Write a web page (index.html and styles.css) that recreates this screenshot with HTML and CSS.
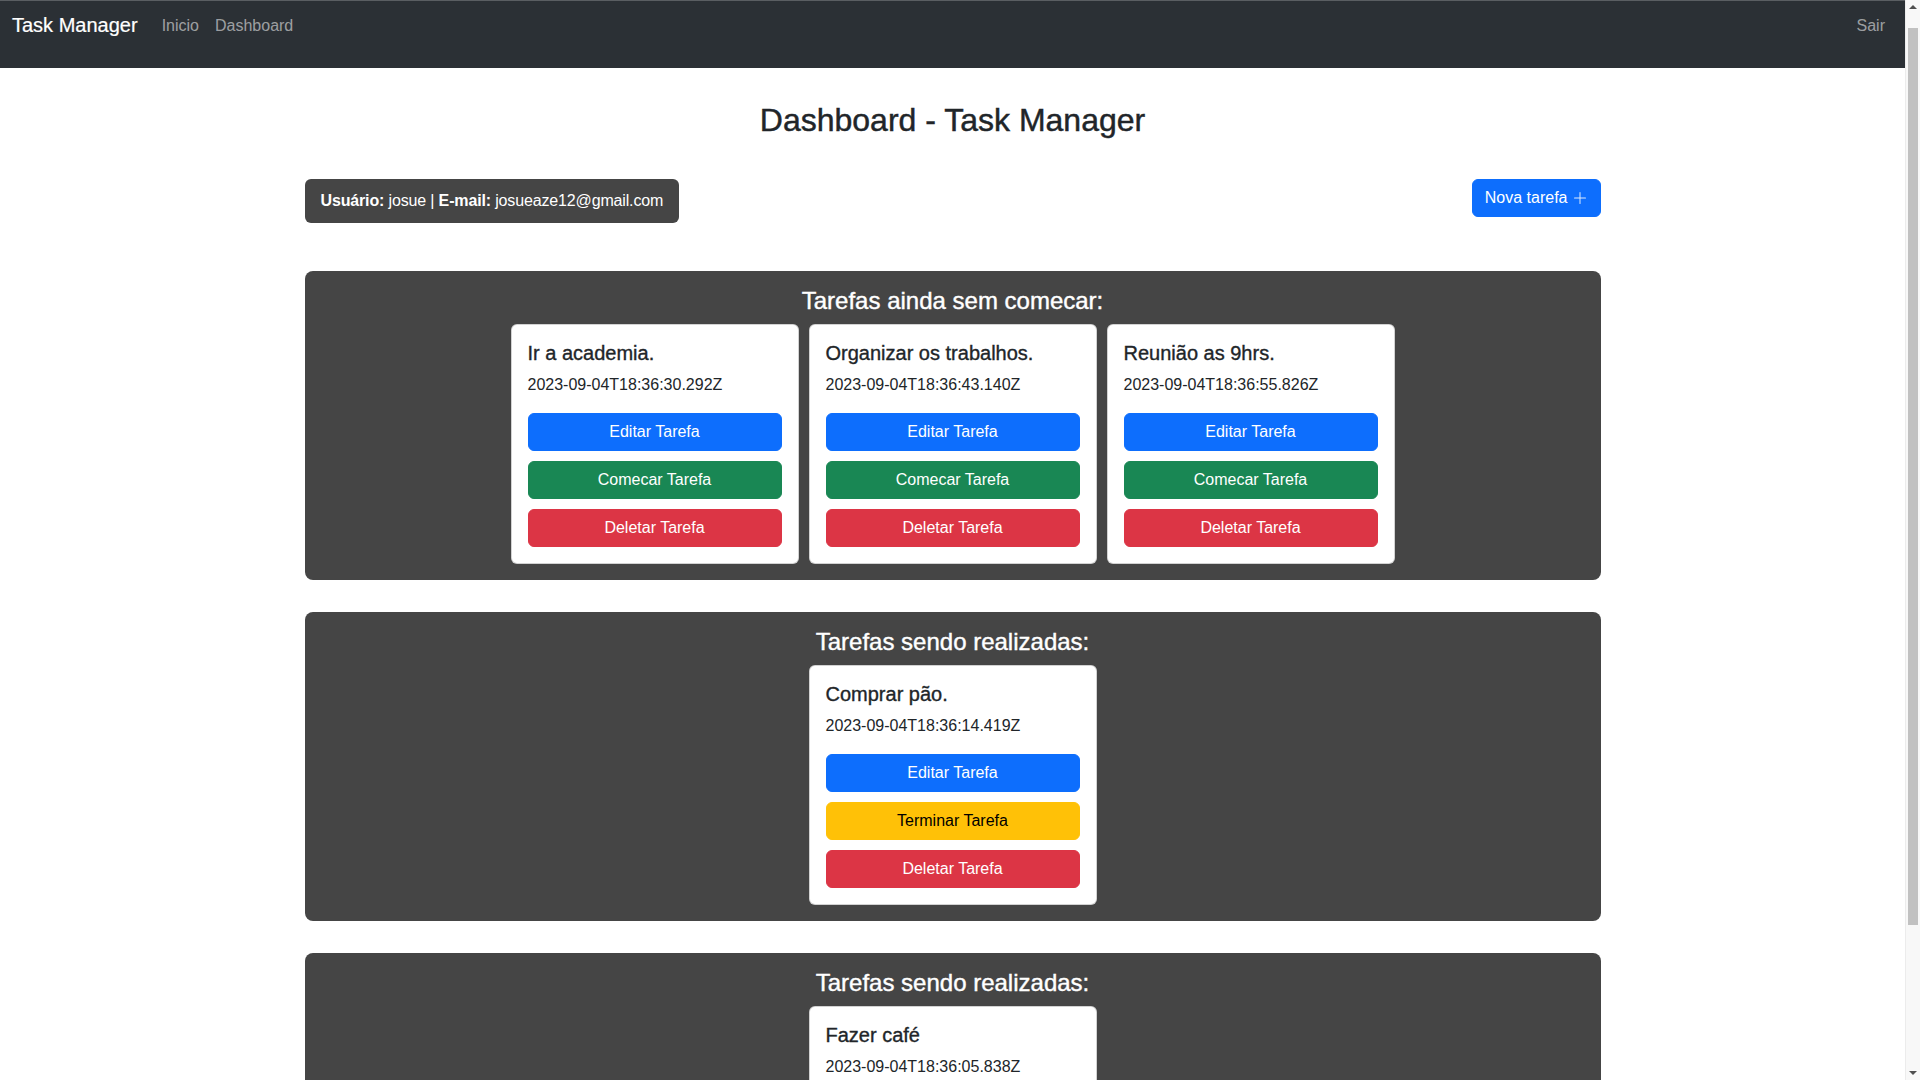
FILE: index.html
```html
<!DOCTYPE html>
<html lang="pt-BR">
<head>
<meta charset="utf-8">
<title>Dashboard - Task Manager</title>
<link rel="stylesheet" href="styles.css">
</head>
<body>
<nav class="navbar">
  <div class="nav-left">
    <a class="brand" href="#">Task Manager</a>
    <a class="nav-link" href="#">Inicio</a>
    <a class="nav-link" href="#">Dashboard</a>
  </div>
  <a class="nav-link" href="#">Sair</a>
</nav>

<main class="container">
  <h2 class="page-title">Dashboard - Task Manager</h2>

  <div class="info-row">
    <div class="user-info"><b>Usuário:</b> josue | <b>E-mail:</b> josueaze12@gmail.com</div>
    <button class="btn btn-primary">Nova tarefa <svg class="plus" width="16" height="16" viewBox="0 0 16 16" fill="currentColor"><path d="M8 2a.5.5 0 0 1 .5.5v5h5a.5.5 0 0 1 0 1h-5v5a.5.5 0 0 1-1 0v-5h-5a.5.5 0 0 1 0-1h5v-5A.5.5 0 0 1 8 2"/></svg></button>
  </div>

  <section class="board">
    <h4 class="board-title">Tarefas ainda sem comecar:</h4>
    <div class="cards">
      <div class="card">
        <h5 class="card-title">Ir a academia.</h5>
        <p class="card-date">2023-09-04T18:36:30.292Z</p>
        <button class="btn btn-primary btn-block">Editar Tarefa</button>
        <button class="btn btn-success btn-block">Comecar Tarefa</button>
        <button class="btn btn-danger btn-block">Deletar Tarefa</button>
      </div>
      <div class="card">
        <h5 class="card-title">Organizar os trabalhos.</h5>
        <p class="card-date">2023-09-04T18:36:43.140Z</p>
        <button class="btn btn-primary btn-block">Editar Tarefa</button>
        <button class="btn btn-success btn-block">Comecar Tarefa</button>
        <button class="btn btn-danger btn-block">Deletar Tarefa</button>
      </div>
      <div class="card">
        <h5 class="card-title">Reunião as 9hrs.</h5>
        <p class="card-date">2023-09-04T18:36:55.826Z</p>
        <button class="btn btn-primary btn-block">Editar Tarefa</button>
        <button class="btn btn-success btn-block">Comecar Tarefa</button>
        <button class="btn btn-danger btn-block">Deletar Tarefa</button>
      </div>
    </div>
  </section>

  <section class="board">
    <h4 class="board-title">Tarefas sendo realizadas:</h4>
    <div class="cards">
      <div class="card">
        <h5 class="card-title">Comprar pão.</h5>
        <p class="card-date">2023-09-04T18:36:14.419Z</p>
        <button class="btn btn-primary btn-block">Editar Tarefa</button>
        <button class="btn btn-warning btn-block">Terminar Tarefa</button>
        <button class="btn btn-danger btn-block">Deletar Tarefa</button>
      </div>
    </div>
  </section>

  <section class="board board-last">
    <h4 class="board-title">Tarefas sendo realizadas:</h4>
    <div class="cards">
      <div class="card">
        <h5 class="card-title">Fazer café</h5>
        <p class="card-date">2023-09-04T18:36:05.838Z</p>
      </div>
    </div>
  </section>
</main>

<div class="scrollbar" aria-hidden="true">
  <div class="sb-arrow sb-up"></div>
  <div class="sb-track"><div class="sb-thumb"></div></div>
  <div class="sb-arrow sb-down"></div>
</div>
</body>
</html>
```

FILE: styles.css
```css
html, body {
  margin: 0;
  padding: 0;
}

html {
  height: 1080px;
  overflow: hidden;
}

body {
  margin-right: 15px;
  height: 1080px;
  overflow: hidden;
  font-family: "Liberation Sans", Arial, sans-serif;
  font-size: 16px;
  line-height: 1.5;
  color: #212529;
  background: #ffffff;
}

a {
  text-decoration: none;
}

.navbar {
  box-sizing: border-box;
  height: 68px;
  background: #2b3035;
  border-top: 1px solid #5a5e62;
  padding: 9px 12px 0 12px;
  display: flex;
  justify-content: space-between;
  align-items: flex-start;
}

.nav-left {
  display: flex;
  align-items: flex-start;
}

.brand {
  font-size: 20px;
  line-height: 30px;
  color: #ffffff;
  margin-right: 16px;
  -webkit-text-stroke: 0.2px #ffffff;
}

.nav-link {
  font-size: 16px;
  line-height: 24px;
  padding: 4px 8px;
  color: rgba(255, 255, 255, 0.55);
}

.container {
  box-sizing: border-box;
  max-width: 1320px;
  margin: 0 auto;
  padding: 33px 12px 0;
}

.page-title {
  margin: 0 0 40px;
  font-size: 32px;
  line-height: 1.2;
  font-weight: 500;
  text-align: center;
  color: #212529;
  -webkit-text-stroke: 0.45px #212529;
}

.info-row {
  display: flex;
  justify-content: space-between;
  align-items: flex-start;
  margin-bottom: 48px;
}

.user-info {
  background: #454545;
  color: #ffffff;
  padding: 10px 16px;
  border-radius: 6px;
  line-height: 24px;
  letter-spacing: -0.15px;
}

.btn {
  box-sizing: border-box;
  font-family: inherit;
  font-size: 16px;
  line-height: 24px;
  padding: 6px 12px;
  border: 1px solid transparent;
  border-radius: 6px;
  color: #ffffff;
  cursor: pointer;
  display: inline-flex;
  align-items: center;
  justify-content: center;
  height: 38px;
}

.plus {
  margin-left: 4px;
  opacity: 0.85;
}

.btn-primary {
  background: #0d6efd;
  border-color: #0d6efd;
}

.btn-success {
  background: #198754;
  border-color: #198754;
}

.btn-danger {
  background: #dc3545;
  border-color: #dc3545;
}

.btn-warning {
  background: #ffc107;
  border-color: #ffc107;
  color: #000000;
}

.btn-block {
  display: flex;
  width: 100%;
}

.btn-block + .btn-block {
  margin-top: 10px;
}

.board {
  background: #454545;
  border-radius: 8px;
  padding: 16px;
  margin-bottom: 32px;
}

.board-last {
  height: 400px;
}

.board-title {
  margin: 0 0 8px;
  font-size: 24px;
  line-height: 1.2;
  font-weight: 500;
  color: #ffffff;
  text-align: center;
  -webkit-text-stroke: 0.4px #ffffff;
}

.cards {
  display: flex;
  justify-content: center;
  flex-wrap: wrap;
  gap: 10px;
}

.card {
  box-sizing: border-box;
  width: 288px;
  min-height: 240px;
  background: #ffffff;
  border: 1px solid rgba(0, 0, 0, 0.175);
  border-radius: 6px;
  padding: 16px;
  text-align: left;
}

.card-title {
  margin: 0 0 8px;
  font-size: 20px;
  line-height: 1.2;
  font-weight: 500;
  color: #212529;
  -webkit-text-stroke: 0.35px #212529;
}

.card-date {
  margin: 0 0 16px;
}

.scrollbar {
  position: fixed;
  top: 0;
  right: 0;
  bottom: 0;
  width: 15px;
  background: #f8f8f8;
  border-left: 1px solid #ececec;
  box-sizing: border-box;
  display: flex;
  flex-direction: column;
}

.sb-arrow {
  height: 15px;
  flex: none;
  position: relative;
}

.sb-up::after,
.sb-down::after {
  content: "";
  position: absolute;
  left: 3px;
  width: 0;
  height: 0;
  border-left: 4px solid transparent;
  border-right: 4px solid transparent;
}

.sb-up::after {
  top: 5px;
  border-bottom: 4px solid #505050;
}

.sb-down::after {
  bottom: 5px;
  border-top: 4px solid #505050;
}

.sb-track {
  flex: 1;
  padding: 13px 2px 0 2px;
}

.sb-thumb {
  height: 897px;
  background: #c1c1c1;
  border-radius: 0;
}
```
